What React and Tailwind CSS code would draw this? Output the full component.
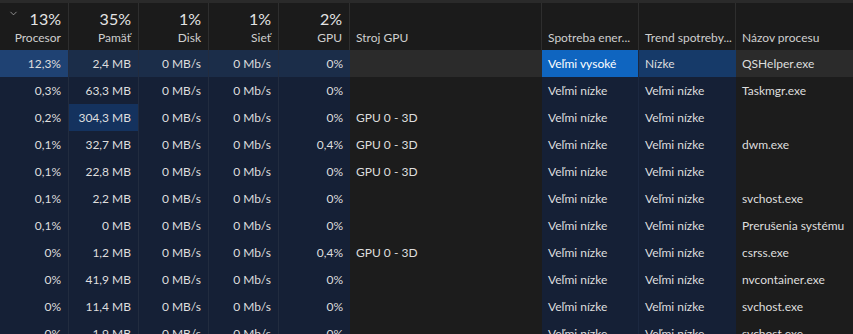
import React from 'react';
import { ChevronDown } from 'lucide-react';

const rows = [
  { cpu: '12,3%', mem: '2,4 MB', disk: '0 MB/s', net: '0 Mb/s', gpu: '0%', engine: '', power: 'Veľmi vysoké', trend: 'Nízke', name: 'QSHelper.exe' },
  { cpu: '0,3%', mem: '63,3 MB', disk: '0 MB/s', net: '0 Mb/s', gpu: '0%', engine: '', power: 'Veľmi nízke', trend: 'Veľmi nízke', name: 'Taskmgr.exe' },
  { cpu: '0,2%', mem: '304,3 MB', disk: '0 MB/s', net: '0 Mb/s', gpu: '0%', engine: 'GPU 0 - 3D', power: 'Veľmi nízke', trend: 'Veľmi nízke', name: '' },
  { cpu: '0,1%', mem: '32,7 MB', disk: '0 MB/s', net: '0 Mb/s', gpu: '0,4%', engine: 'GPU 0 - 3D', power: 'Veľmi nízke', trend: 'Veľmi nízke', name: 'dwm.exe' },
  { cpu: '0,1%', mem: '22,8 MB', disk: '0 MB/s', net: '0 Mb/s', gpu: '0%', engine: 'GPU 0 - 3D', power: 'Veľmi nízke', trend: 'Veľmi nízke', name: '' },
  { cpu: '0,1%', mem: '2,2 MB', disk: '0 MB/s', net: '0 Mb/s', gpu: '0%', engine: '', power: 'Veľmi nízke', trend: 'Veľmi nízke', name: 'svchost.exe' },
  { cpu: '0,1%', mem: '0 MB', disk: '0 MB/s', net: '0 Mb/s', gpu: '0%', engine: '', power: 'Veľmi nízke', trend: 'Veľmi nízke', name: 'Prerušenia systému' },
  { cpu: '0%', mem: '1,2 MB', disk: '0 MB/s', net: '0 Mb/s', gpu: '0,4%', engine: 'GPU 0 - 3D', power: 'Veľmi nízke', trend: 'Veľmi nízke', name: 'csrss.exe' },
  { cpu: '0%', mem: '41,9 MB', disk: '0 MB/s', net: '0 Mb/s', gpu: '0%', engine: '', power: 'Veľmi nízke', trend: 'Veľmi nízke', name: 'nvcontainer.exe' },
  { cpu: '0%', mem: '11,4 MB', disk: '0 MB/s', net: '0 Mb/s', gpu: '0%', engine: '', power: 'Veľmi nízke', trend: 'Veľmi nízke', name: 'svchost.exe' },
  { cpu: '0%', mem: '1,9 MB', disk: '0 MB/s', net: '0 Mb/s', gpu: '0%', engine: '', power: 'Veľmi nízke', trend: 'Veľmi nízke', name: 'svchost.exe' },
];

const grid = 'grid grid-cols-[69px_70px_70px_70px_71px_192px_97px_97px_117px]';

const HeadNum = ({ pct, label }) => (
  <div className="flex flex-col items-end justify-end pr-[7px] pb-[4px] border-r border-[#2e2e2e]">
    <span className="text-[16px] leading-[20px] text-[#e4e4e4]">{pct}</span>
    <span className="text-[12px] leading-[17px] text-[#cfcfcf]">{label}</span>
  </div>
);

const HeadText = ({ label, border = true }) => (
  <div className={`flex items-end pl-[6px] pb-[4px] text-[12px] leading-[17px] text-[#cfcfcf] whitespace-nowrap overflow-hidden ${border ? 'border-r border-[#2e2e2e]' : ''}`}>
    {label}
  </div>
);

const Num = ({ children, bg }) => (
  <div className={`flex items-center justify-end pr-[7px] border-r border-[#222c3f] ${bg}`}>{children}</div>
);

const Txt = ({ children, bg, border = '' }) => (
  <div className={`flex items-center pl-[6px] whitespace-nowrap overflow-hidden ${border} ${bg}`}>{children}</div>
);

export default function App() {
  return (
    <div className="w-[853px] h-[334px] overflow-hidden bg-[#1c1c1c] text-[#dedede]" style={{ fontFamily: 'Lato, "Noto Sans", sans-serif' }}>
      <div className="h-[3px] bg-[#2a2a2a]" />
      <div className={`${grid} h-[47px] bg-[#1b1b1b]`}>
        <div className="relative flex flex-col items-end justify-end pr-[7px] pb-[4px] border-r border-[#2e2e2e]">
          <ChevronDown className="absolute left-[8px] top-[5px] w-[11px] h-[11px] text-[#bdbdbd]" strokeWidth={1.5} />
          <span className="text-[16px] leading-[20px] text-[#e4e4e4]">13%</span>
          <span className="text-[12px] leading-[17px] text-[#cfcfcf]">Procesor</span>
        </div>
        <HeadNum pct="35%" label="Pamäť" />
        <HeadNum pct="1%" label="Disk" />
        <HeadNum pct="1%" label="Sieť" />
        <HeadNum pct="2%" label="GPU" />
        <HeadText label="Stroj GPU" />
        <HeadText label="Spotreba ener..." />
        <HeadText label="Trend spotreby..." />
        <HeadText label="Názov procesu" border={false} />
      </div>
      <div className="flex flex-col text-[12px]">
        {rows.map((r, i) => {
          const first = i === 0;
          const navy = first ? 'bg-[#1b2d49]' : 'bg-[#152036]';
          const gray = first ? 'bg-[#2b2b2b]' : 'bg-[#1c1c1c]';
          return (
            <div key={i} className={`${grid} h-[27px] shrink-0`}>
              <Num bg={first ? 'bg-[#1f4273]' : navy}>{r.cpu}</Num>
              <Num bg={i === 2 ? 'bg-[#14325e]' : navy}>{r.mem}</Num>
              <Num bg={navy}>{r.disk}</Num>
              <Num bg={navy}>{r.net}</Num>
              <div className={`flex items-center justify-end pr-[7px] ${navy}`}>{r.gpu}</div>
              <Txt bg={gray}>{r.engine}</Txt>
              <Txt bg={first ? 'bg-[#0f65c0] text-white' : 'bg-[#152036]'} border="border-r border-[#1c2840]">{r.power}</Txt>
              <Txt bg={first ? 'bg-[#163a69]' : 'bg-[#152036]'}>{r.trend}</Txt>
              <Txt bg={gray}>{r.name}</Txt>
            </div>
          );
        })}
      </div>
    </div>
  );
}
